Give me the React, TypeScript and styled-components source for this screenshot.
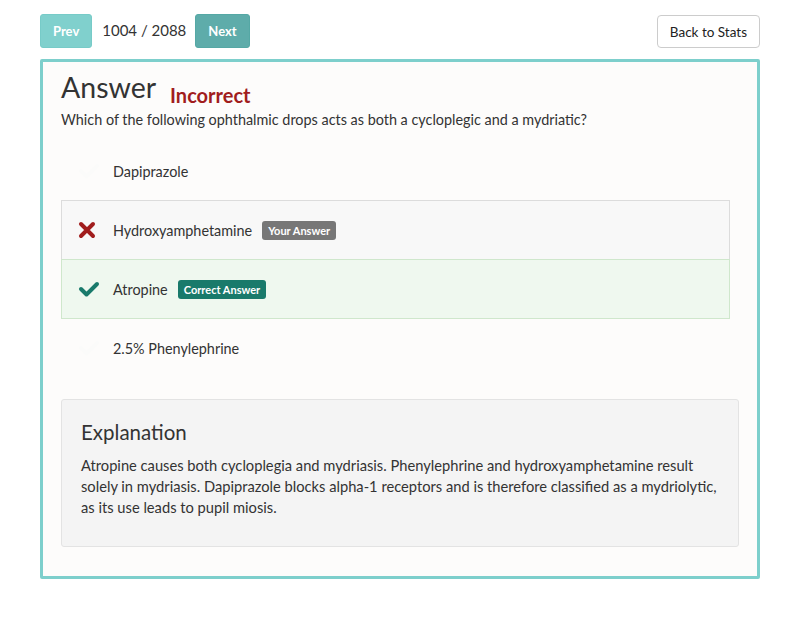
import styled, { createGlobalStyle } from 'styled-components';

const GlobalStyle = createGlobalStyle`
  body {
    margin: 0;
    background: #fff;
    font-family: Lato, 'Open Sans', sans-serif;
    color: #333;
  }
`;

type OptionState = 'none' | 'wrong' | 'right';

const options: { text: string; state: OptionState }[] = [
  { text: 'Dapiprazole', state: 'none' },
  { text: 'Hydroxyamphetamine', state: 'wrong' },
  { text: 'Atropine', state: 'right' },
  { text: '2.5% Phenylephrine', state: 'none' },
];

const Page = styled.div`
  padding: 14px 40px 40px;
`;

const TopBar = styled.div`
  display: flex;
  align-items: center;
  justify-content: space-between;
`;

const Nav = styled.div`
  display: flex;
  align-items: center;
`;

const NavButton = styled.button<{ $dark?: boolean }>`
  height: 34px;
  padding: 0 12px;
  border: 1px solid ${(p) => (p.$dark ? '#55a8a5' : '#77cbc8')};
  border-radius: 3px;
  background: ${(p) => (p.$dark ? '#5eacaa' : '#80d0cd')};
  color: #fff;
  font-family: Lato, sans-serif;
  font-weight: 700;
  font-size: 13px;
  cursor: pointer;
`;

const Counter = styled.span`
  font-size: 15px;
  color: #333;
  margin: 0 9px 0 10px;
  padding-bottom: 3px;
`;

const BackButton = styled.button`
  height: 33px;
  margin-top: 1px;
  padding: 0 12px;
  background: #fff;
  border: 1px solid #ccc;
  border-radius: 4px;
  font-family: Lato, sans-serif;
  font-size: 13.5px;
  color: #222;
  cursor: pointer;
`;

const Card = styled.div`
  margin-top: 11px;
  border: 3px solid #7dcfcc;
  border-radius: 2px;
  background: #fdfcfb;
  padding: 8px 18px 29px;
`;

const HeadingRow = styled.div`
  display: flex;
  align-items: flex-end;
`;

const Title = styled.h1`
  margin: 0;
  font-size: 28.5px;
  font-weight: 400;
  line-height: 34px;
  color: #333;
`;

const Verdict = styled.span`
  margin-left: 14px;
  margin-bottom: -4px;
  font-size: 20px;
  font-weight: 700;
  color: #a11d1d;
  line-height: 26px;
`;

const Question = styled.p`
  margin: 6px 0 0;
  font-size: 14.4px;
  line-height: 20px;
  color: #333;
`;

const OptionList = styled.div`
  margin: 12px 9px 0 0;
  display: flex;
  flex-direction: column;
`;

const OptionRow = styled.div<{ $state: OptionState }>`
  display: flex;
  align-items: center;
  height: 58px;
  padding: 0 16px;
  margin-top: -1px;
  border: 1px solid
    ${(p) => (p.$state === 'wrong' ? '#dcdcdc' : p.$state === 'right' ? '#cfe7cc' : 'transparent')};
  background: ${(p) => (p.$state === 'wrong' ? '#f8f8f8' : p.$state === 'right' ? '#eff8ef' : 'transparent')};
  position: relative;
  z-index: ${(p) => (p.$state === 'right' ? 1 : 0)};
  font-size: 14.4px;
`;

const IconSlot = styled.span`
  width: 22px;
  display: flex;
  align-items: center;
  margin-right: 13px;
`;

const Badge = styled.span<{ $right?: boolean }>`
  margin-left: 10px;
  padding: 2px 6px;
  border-radius: 3px;
  background: ${(p) => (p.$right ? '#197a6b' : '#777')};
  color: #fff;
  font-size: 11px;
  font-weight: 700;
  line-height: 15px;
`;

const Explanation = styled.div`
  margin-top: 21px;
  background: #f4f4f4;
  border: 1px solid #e3e3e3;
  border-radius: 3px;
  padding: 18px 14px 28px 19px;
`;

const ExplanationTitle = styled.h2`
  margin: 0 0 9px;
  font-size: 20.5px;
  font-weight: 400;
  line-height: 28px;
  color: #333;
`;

const ExplanationText = styled.p`
  margin: 0;
  font-size: 14.7px;
  line-height: 21px;
  color: #333;
`;

function Cross() {
  return (
    <svg width="18" height="18" viewBox="0 0 18 18">
      <path d="M3 3 L15 15 M15 3 L3 15" stroke="#a11d1d" strokeWidth="4" strokeLinecap="round" />
    </svg>
  );
}

function Check({ color }: { color: string }) {
  return (
    <svg width="22" height="18" viewBox="0 0 22 18">
      <path d="M3 9 L8.5 14.5 L19 4" fill="none" stroke={color} strokeWidth="4" strokeLinecap="round" strokeLinejoin="round" />
    </svg>
  );
}

export default function App() {
  return (
    <Page>
      <GlobalStyle />
      <TopBar>
        <Nav>
          <NavButton>Prev</NavButton>
          <Counter>1004 / 2088</Counter>
          <NavButton $dark>Next</NavButton>
        </Nav>
        <BackButton>Back to Stats</BackButton>
      </TopBar>
      <Card>
        <HeadingRow>
          <Title>Answer</Title>
          <Verdict>Incorrect</Verdict>
        </HeadingRow>
        <Question>Which of the following ophthalmic drops acts as both a cycloplegic and a mydriatic?</Question>
        <OptionList>
          {options.map((o) => (
            <OptionRow key={o.text} $state={o.state}>
              <IconSlot>
                {o.state === 'wrong' ? <Cross /> : <Check color={o.state === 'right' ? '#197a6b' : '#fbfbfa'} />}
              </IconSlot>
              {o.text}
              {o.state === 'wrong' && <Badge>Your Answer</Badge>}
              {o.state === 'right' && <Badge $right>Correct Answer</Badge>}
            </OptionRow>
          ))}
        </OptionList>
        <Explanation>
          <ExplanationTitle>Explanation</ExplanationTitle>
          <ExplanationText>
            Atropine causes both cycloplegia and mydriasis. Phenylephrine and hydroxyamphetamine result solely in
            mydriasis. Dapiprazole blocks alpha-1 receptors and is therefore classified as a mydriolytic, as its use
            leads to pupil miosis.
          </ExplanationText>
        </Explanation>
      </Card>
    </Page>
  );
}
